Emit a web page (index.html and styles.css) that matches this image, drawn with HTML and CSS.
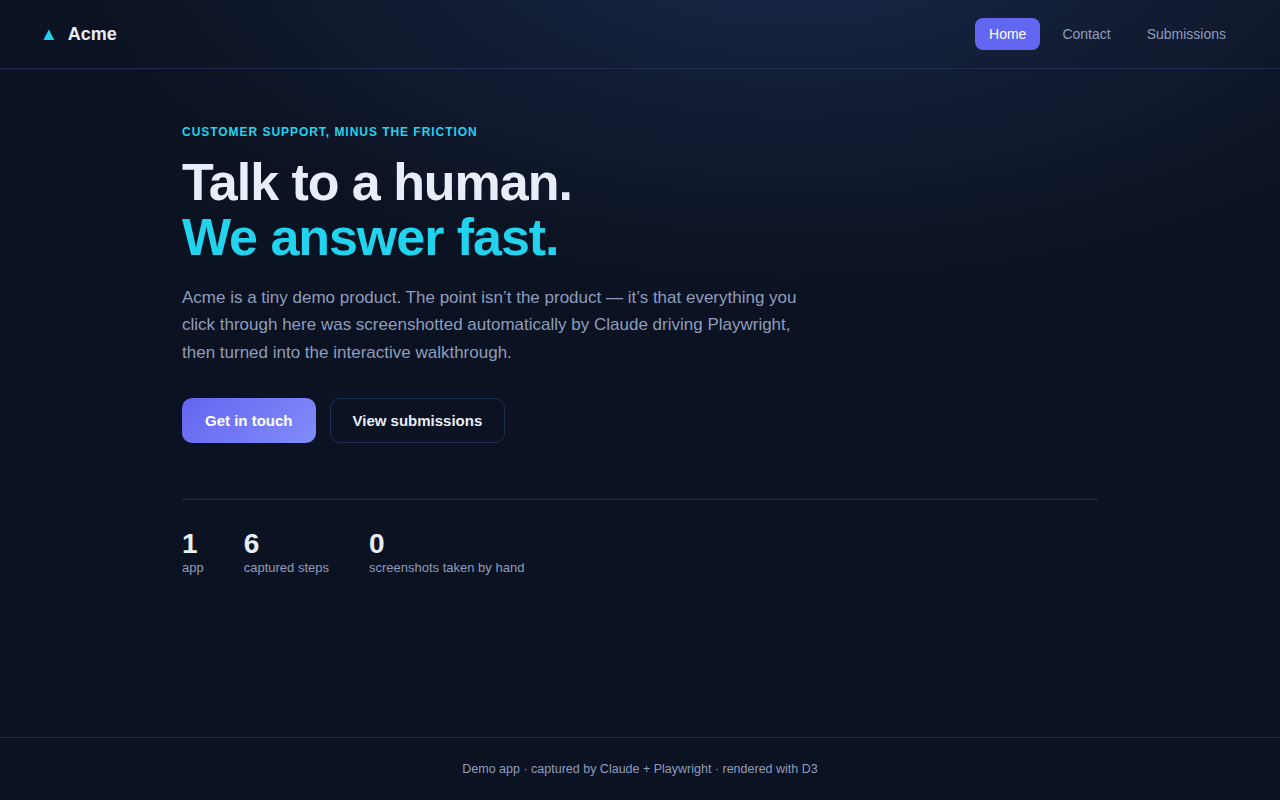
FILE: index.html
```html
<!DOCTYPE html>
<html lang="en">
<head>
<meta charset="utf-8">
<title>Acme</title>
<link rel="stylesheet" href="styles.css">
</head>
<body>
<header class="nav">
  <a class="brand"><span class="mark">▲</span><span>Acme</span></a>
  <nav class="links">
    <a class="link active">Home</a>
    <a class="link">Contact</a>
    <a class="link">Submissions</a>
  </nav>
</header>
<main class="main">
  <p class="eyebrow">Customer support, minus the friction</p>
  <h1 class="title">Talk to a human.<br><span class="accent">We answer fast.</span></h1>
  <p class="lede">Acme is a tiny demo product. The point isn’t the product — it’s that everything you click through here was screenshotted automatically by Claude driving Playwright, then turned into the interactive walkthrough.</p>
  <div class="actions">
    <a class="btn primary">Get in touch</a>
    <a class="btn ghost">View submissions</a>
  </div>
  <div class="stats">
    <div class="stat"><strong>1</strong><span>app</span></div>
    <div class="stat"><strong>6</strong><span>captured steps</span></div>
    <div class="stat"><strong>0</strong><span>screenshots taken by hand</span></div>
  </div>
</main>
<footer class="footer">Demo app · captured by Claude + Playwright · rendered with D3</footer>
</body>
</html>
```
FILE: styles.css
```css
* { box-sizing: border-box; }
html, body { height: 100%; }
body {
  margin: 0;
  min-height: 100vh;
  display: flex;
  flex-direction: column;
  background: radial-gradient(1200px 600px at 62% -80px, #1a2849 0%, rgba(26,40,73,0) 60%), #0b1221;
  color: #e8eef9;
  font-family: "Liberation Sans", Arial, sans-serif;
}
.nav {
  display: flex;
  justify-content: space-between;
  align-items: center;
  height: 69px;
  padding: 0 40px;
  border-bottom: 1px solid #1f2e50;
}
.brand { display: flex; align-items: center; gap: 10px; font-size: 18px; font-weight: 700; color: #e8eef9; }
.mark { color: #22d3ee; }
.links { display: flex; gap: 8px; }
.link { padding: 8px 14px; border-radius: 8px; font-size: 14px; line-height: 16px; color: #8e9dbd; }
.active { background: #6366f1; color: #fff; }
.main { flex: 1; width: 916px; margin: 0 auto; padding-top: 56px; }
.eyebrow { margin: 0 0 16px; font-size: 12px; line-height: 14px; font-weight: 700; letter-spacing: 0.08em; text-transform: uppercase; color: #22d3ee; }
.title { margin: 0 0 20px; font-size: 52px; line-height: 54.6px; letter-spacing: -0.02em; font-weight: 700; color: #e8eef9; }
.accent { color: #22d3ee; }
.lede { margin: 0 0 32px; max-width: 640px; font-size: 17px; line-height: 27.2px; color: #8e9dbd; }
.actions { display: flex; gap: 14px; }
.btn { padding: 13px 22px; border: 1px solid transparent; border-radius: 10px; font-size: 15px; line-height: 17px; font-weight: 700; color: #e8eef9; }
.primary { color: #fff; background: linear-gradient(135deg, #6366f1, #818cf8) border-box; }
.ghost { border-color: #1f2e50; }
.stats { display: flex; gap: 40px; margin-top: 56px; padding-top: 28px; border-top: 1px solid #1f2e50; }
.stat { display: flex; flex-direction: column; }
.stat strong { font-size: 28px; line-height: 32px; color: #e8eef9; }
.stat span { font-size: 13px; line-height: 15px; color: #8e9dbd; }
.footer { height: 63px; padding-top: 24px; border-top: 1px solid #1f2e50; text-align: center; font-size: 12.5px; line-height: 14px; color: #8e9dbd; }
```
